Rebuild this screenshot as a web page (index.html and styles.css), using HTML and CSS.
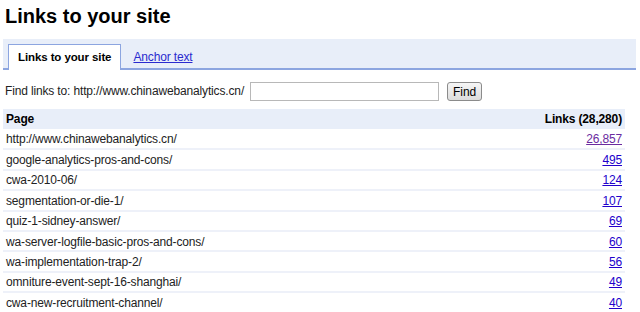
FILE: index.html
```html
<!DOCTYPE html>
<html lang="en">
<head>
    <meta charset="UTF-8">
    <title>Links to your site</title>
    <link rel="stylesheet" href="styles.css">
</head>
<body>
    <h1 class="title">Links to your site</h1>

    <!-- Tabs -->
    <div class="tabs">
        <span class="tab active">Links to your site</span>
        <a class="tab" href="#">Anchor text</a>
    </div>

    <!-- Search -->
    <form class="find">
        <label>Find links to: http://www.chinawebanalytics.cn/</label>
        <input type="text" class="find-input">
        <button type="button" class="find-btn">Find</button>
    </form>

    <table class="links">
        <thead>
            <tr><th>Page</th><th class="num">Links (28,280)</th></tr>
        </thead>
        <tbody>
            <tr><td>http://www.chinawebanalytics.cn/</td><td class="num"><a class="visited" href="#">26,857</a></td></tr>
            <tr><td>google-analytics-pros-and-cons/</td><td class="num"><a href="#">495</a></td></tr>
            <tr><td>cwa-2010-06/</td><td class="num"><a href="#">124</a></td></tr>
            <tr><td>segmentation-or-die-1/</td><td class="num"><a href="#">107</a></td></tr>
            <tr><td>quiz-1-sidney-answer/</td><td class="num"><a href="#">69</a></td></tr>
            <tr><td>wa-server-logfile-basic-pros-and-cons/</td><td class="num"><a href="#">60</a></td></tr>
            <tr><td>wa-implementation-trap-2/</td><td class="num"><a href="#">56</a></td></tr>
            <tr><td>omniture-event-sept-16-shanghai/</td><td class="num"><a href="#">49</a></td></tr>
            <tr><td>cwa-new-recruitment-channel/</td><td class="num"><a href="#">40</a></td></tr>
        </tbody>
    </table>
</body>
</html>
```
FILE: styles.css
```css
* {
    margin: 0;
    padding: 0;
    box-sizing: border-box;
}

body {
    font-family: 'Liberation Sans', Arial, sans-serif;
    font-size: 12px;
    letter-spacing: -0.15px;
    color: #222;
    background: #fff;
    padding: 0 4px 0 3px;
    overflow: hidden;
}

.title {
    font-size: 20px;
    letter-spacing: 0;
    font-weight: bold;
    color: #000;
    padding: 5px 0 0 2px;
    height: 39px;
}

/* Tabs */
.tabs {
    background: #e8eef9;
    border-bottom: 2px solid #8ca5e0;
    height: 31px;
    padding: 5px 0 0 5px;
    display: flex;
    align-items: flex-end;
    width: 633px;
}

.tab {
    display: block;
    height: 25px;
    line-height: 24px;
    padding: 0 9px;
    margin-bottom: -2px;
}

.tab.active {
    background: #fff;
    border: 1px solid #8ca5e0;
    border-bottom: none;
    height: 26px;
    font-weight: bold;
    font-size: 11.5px;
    letter-spacing: -0.1px;
    color: #000;
}

.tabs a.tab {
    color: #2a2acf;
    margin-left: 3px;
}

/* Find */
.find {
    display: flex;
    align-items: flex-start;
    padding: 12px 0 0 2px;
    height: 39px;
}

.find label {
    line-height: 19px;
}

.find-input {
    width: 189px;
    height: 19px;
    margin-left: 6px;
    border: 1px solid #b8b8b8;
}

.find-btn {
    width: 35px;
    height: 19px;
    margin-left: 8px;
    font-family: 'Liberation Sans', Arial, sans-serif;
    font-size: 12px;
    border: 1px solid #8b8b8b;
    border-radius: 3px;
    background: linear-gradient(#f6f6f6, #dcdcdc);
}

/* Table */
.links {
    width: 622px;
    border-collapse: collapse;
}

.links th {
    background: #e8eef9;
    font-weight: bold;
    text-align: left;
    height: 20px;
    padding: 0 3px;
    color: #000;
}

.links td {
    height: 20.4px;
    padding: 1px 3px 0;
    border-bottom: 2px solid #eef1f9;
}

.links .num {
    text-align: right;
}

.links a {
    color: #2200cc;
}

.links a.visited {
    color: #6b2b9f;
}
```
